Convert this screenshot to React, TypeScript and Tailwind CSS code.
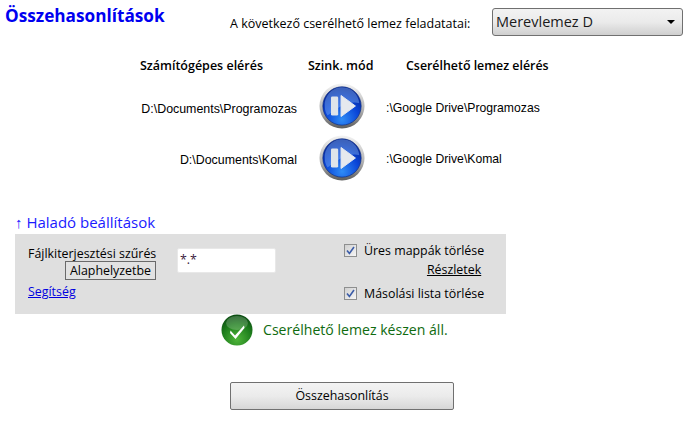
const uiFont = "font-['Open_Sans','Noto_Sans',sans-serif]";

function SyncIcon({ id }: { id: string }) {
  return (
    <svg width="46" height="46" viewBox="0 0 48 48" className="shrink-0">
      <defs>
        <linearGradient id={`ring-${id}`} x1="0" y1="0" x2="0" y2="1">
          <stop offset="0" stopColor="#f4f4f4" />
          <stop offset="0.6" stopColor="#b0b0b0" />
          <stop offset="1" stopColor="#5c5c5c" />
        </linearGradient>
        <radialGradient id={`ball-${id}`} cx="0.5" cy="0.85" r="0.8">
          <stop offset="0" stopColor="#2f8cf5" />
          <stop offset="0.55" stopColor="#0a45d8" />
          <stop offset="1" stopColor="#06238f" />
        </radialGradient>
      </defs>
      <circle cx="24" cy="24" r="23.5" fill={`url(#ring-${id})`} />
      <circle cx="24" cy="24" r="20" fill={`url(#ball-${id})`} stroke="#0a2a80" strokeWidth="0.7" />
      <path d="M6 24a18 18 0 0 1 36 -3c-12 -3 -24 6 -33 13c-2 -3 -3 -6 -3 -10z" fill="#7fb0f5" opacity="0.45" />
      <rect x="12.5" y="14" width="7.5" height="20" rx="1.5" fill="#dfe4ea" />
      <path d="M23 13 L38 24 L23 35 Z" fill="#e6e9ee" stroke="#e6e9ee" strokeWidth="1" strokeLinejoin="round" />
    </svg>
  );
}

function OkIcon() {
  return (
    <svg width="32" height="32" viewBox="0 0 32 32" className="shrink-0">
      <defs>
        <radialGradient id="ok-ball" cx="0.5" cy="0.8" r="0.8">
          <stop offset="0" stopColor="#4fb53a" />
          <stop offset="0.6" stopColor="#1d7d1c" />
          <stop offset="1" stopColor="#0b4a12" />
        </radialGradient>
      </defs>
      <circle cx="16" cy="16" r="15.5" fill="url(#ok-ball)" />
      <ellipse cx="16" cy="9" rx="11" ry="7" fill="#ffffff" opacity="0.2" />
      <path d="M9.5 16.5 L14 21.5 L23 11.5 L23.5 14 L14.5 25 L9 19 Z" fill="#ffffff" />
    </svg>
  );
}

function CheckRow({ label }: { label: string }) {
  return (
    <div className="flex items-center gap-[7px]">
      <span className="flex h-[13px] w-[13px] items-center justify-center border border-[#8e8f8f] bg-gradient-to-br from-[#d0d0d0] to-[#f6f6f6]">
        <svg width="9" height="9" viewBox="0 0 9 9">
          <path d="M1 4.5 L3.4 7.5 L8 1" fill="none" stroke="#3b5ca8" strokeWidth="1.6" />
        </svg>
      </span>
      <span>{label}</span>
    </div>
  );
}

const rows = [
  { local: "D:\\Documents\\Programozas", remote: ":\\Google Drive\\Programozas" },
  { local: "D:\\Documents\\Komal", remote: ":\\Google Drive\\Komal" },
];

export default function App() {
  return (
    <div className={`flex h-[435px] w-[689px] flex-col overflow-hidden bg-white text-[12.4px] text-black ${uiFont}`}>
      <div className="flex items-start pl-[5px] pt-[8px]">
        <h1 className="-mt-[2px] w-[225px] text-[17.2px] font-bold leading-[20px] text-[#0000f0]">Összehasonlítások</h1>
        <span className="mt-[7px] w-[262px] text-[12.5px] leading-[17px]">A következő cserélhető lemez feladatatai:</span>
        <div className="flex h-[28px] w-[191px] items-center justify-between rounded-[3px] border border-[#707070] bg-gradient-to-b from-[#f2f2f2] via-[#ebebeb] to-[#cfcfcf] pl-[3px] pr-[7px] text-[14.5px] text-[#1a1a1a]">
          <span>Merevlemez D</span>
          <span className="h-0 w-0 border-x-[4px] border-t-[4px] border-x-transparent border-t-black" />
        </div>
      </div>

      <div className="mt-[21px] grid grid-cols-[297px_90px_1fr] items-center">
        <div className="pr-[34px] text-right text-[12.5px] font-semibold leading-[18px]">Számítógépes elérés</div>
        <div className="whitespace-nowrap pl-[11px] text-[12.5px] font-semibold leading-[18px]">Szink. mód</div>
        <div className="pl-[19px] font-semibold leading-[18px]">Cserélhető lemez elérés</div>
        {rows.map((row, i) => (
          <div key={row.local} className="contents font-['Liberation_Sans',Arial,sans-serif]">
            <div className={`text-right text-[12.4px] ${i === 0 ? "mt-[8px] translate-y-[3px]" : "mt-[6px] translate-y-[2px]"}`}>{row.local}</div>
            <div className={`pl-[22px] ${i === 0 ? "mt-[8px]" : "mt-[6px]"}`}>
              <SyncIcon id={`r${i}`} />
            </div>
            <div className={`-translate-x-[1px] text-[12.2px] ${i === 0 ? "mt-[8px] translate-y-[2px]" : "mt-[6px] translate-y-[1px]"}`}>{row.remote}</div>
          </div>
        ))}
      </div>

      <div className="ml-[15px] mt-[31px] text-[15px] leading-[20px] text-[#1a1aff]">↑ Haladó beállítások</div>

      <div className="ml-[15px] mt-[2px] flex h-[80px] w-[491px] bg-[#dfdfdf] pl-[13px] pt-[11px]">
        <div className="flex w-[149px] flex-col items-start">
          <span className="leading-[17px]">Fájlkiterjesztési szűrés</span>
          <button className="-mt-[1px] ml-[37px] h-[19px] w-[91px] border border-[#6a6a6a] bg-[#e2e2e2] text-center text-[12.4px] leading-[15px]">
            Alaphelyzetbe
          </button>
          <a className="mt-[3px] leading-[17px] text-[#0000e0] underline">Segítség</a>
        </div>
        <div className="mt-[3px] h-[25px] w-[99px] rounded-[2px] border border-[#e8e8e8] bg-white pl-[2px] pt-[2px] text-[#3a1a3a]">*.*</div>
        <div className="-mt-[3px] ml-[68px] flex flex-col items-start leading-[17px]">
          <CheckRow label="Üres mappák törlése" />
          <a className="mt-[2px] self-end pr-[3px] text-black underline">Részletek</a>
          <div className="mt-[7px]">
            <CheckRow label="Másolási lista törlése" />
          </div>
        </div>
      </div>

      <div className="ml-[221px] flex items-center gap-[10px]">
        <OkIcon />
        <span className="text-[14.1px] text-[#0f6b0f]">Cserélhető lemez készen áll.</span>
      </div>

      <button className="ml-[230px] mt-[36px] h-[28px] w-[224px] rounded-[2px] border border-[#707070] bg-gradient-to-b from-[#f3f3f3] via-[#ebebeb] to-[#d6d6d6] text-center">
        Összehasonlítás
      </button>
    </div>
  );
}
